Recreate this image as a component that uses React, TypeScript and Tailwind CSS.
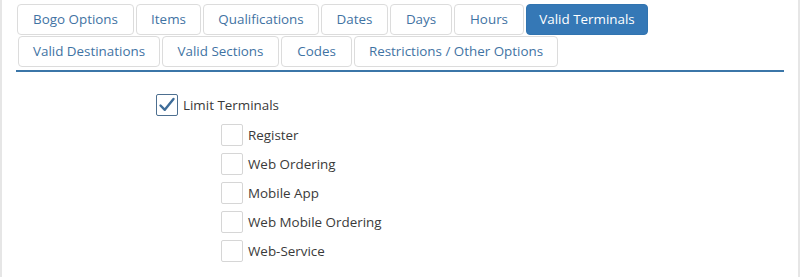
import React, { useState } from 'react';

const row1 = [
  { label: 'Bogo Options', w: 'w-[117px]' },
  { label: 'Items', w: 'w-[65px]' },
  { label: 'Qualifications', w: 'w-[116px]' },
  { label: 'Dates', w: 'w-[67px]' },
  { label: 'Days', w: 'w-[62px]' },
  { label: 'Hours', w: 'w-[70px]' },
  { label: 'Valid Terminals', w: 'w-[122px]' },
];

const row2 = [
  { label: 'Valid Destinations', w: 'w-[142px]' },
  { label: 'Valid Sections', w: 'w-[117px]' },
  { label: 'Codes', w: 'w-[71px]' },
  { label: 'Restrictions / Other Options', w: 'w-[204px]' },
];

const terminals = ['Register', 'Web Ordering', 'Mobile App', 'Web Mobile Ordering', 'Web-Service'];

const CheckBox = ({ checked, onClick }: { checked: boolean; onClick: () => void }) => (
  <button
    type="button"
    onClick={onClick}
    className={
      checked
        ? 'flex h-[22px] w-[22px] items-center justify-center rounded-[2px] border border-[#4d6f90] bg-white'
        : 'flex h-[22px] w-[22px] items-center justify-center rounded-[2px] border border-[#d6d6d6] bg-white'
    }
  >
    {checked && (
      <svg width="18" height="18" viewBox="0 0 18 18" fill="none">
        <path d="M2.5 9.5 L6.8 13.8 L15.5 3" stroke="#3f6d99" strokeWidth="2.4" strokeLinecap="round" strokeLinejoin="round" />
      </svg>
    )}
  </button>
);

const App = () => {
  const [active, setActive] = useState('Valid Terminals');
  const [limit, setLimit] = useState(true);
  const [picked, setPicked] = useState<string[]>([]);

  const toggle = (t: string) =>
    setPicked(prev => (prev.includes(t) ? prev.filter(p => p !== t) : [...prev, t]));

  const tab = (t: { label: string; w: string }) => (
    <button
      key={t.label}
      type="button"
      onClick={() => setActive(t.label)}
      className={
        active === t.label
          ? `${t.w} h-[31px] rounded-[4px] border border-[#3174b0] bg-[#3578b6] text-center text-[13.4px] text-white`
          : `${t.w} h-[31px] rounded-[4px] border border-[#dcdcdc] bg-white text-center text-[13.4px] text-[#3f73a3]`
      }
    >
      {t.label}
    </button>
  );

  return (
    <div
      className="h-[277px] w-[800px] border-x-2 border-[#e6e6e6] bg-white"
      style={{ fontFamily: '"Segoe UI", "Open Sans", "Noto Sans", sans-serif' }}
    >
      <div className="px-[14px] pt-[4px]">
        <div className="flex gap-[2px] pl-px">{row1.map(tab)}</div>
        <div className="mt-px flex gap-[2px] pl-[2px]">{row2.map(tab)}</div>
        <div className="mt-[3px] h-[2px] w-[768px] bg-[#3b76a8]" />

        <div className="ml-[140px] mt-[22px]">
          <label className="flex items-center gap-[5px] text-[13.4px] text-[#3a3a3a]">
            <CheckBox checked={limit} onClick={() => setLimit(!limit)} />
            <span>Limit Terminals</span>
          </label>
          <div className="ml-[65px] mt-[8px] flex flex-col gap-[7px]">
            {terminals.map(t => (
              <label key={t} className="flex items-center gap-[5px] text-[13.4px] text-[#3a3a3a]">
                <CheckBox checked={picked.includes(t)} onClick={() => toggle(t)} />
                <span>{t}</span>
              </label>
            ))}
          </div>
        </div>
      </div>
    </div>
  );
};

export default App;
